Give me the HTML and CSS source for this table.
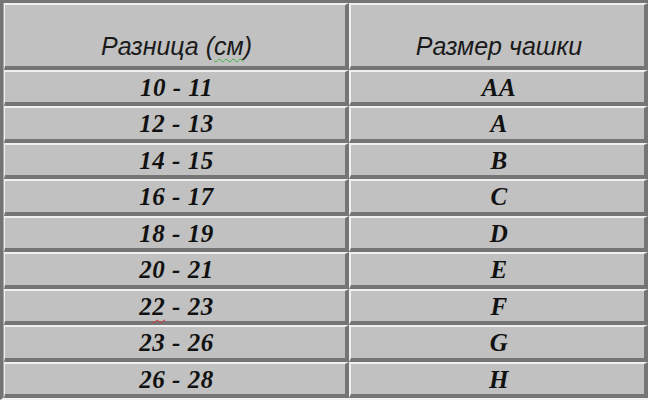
FILE: index.html
```html
<!DOCTYPE html>
<html lang="ru">
<head>
<meta charset="utf-8">
<title>Размер чашки</title>
<link rel="stylesheet" href="styles.css">
</head>
<body>
<div class="sheet">
  <div class="cell head">Разница (<span class="sq-green">см</span>)</div>
  <div class="cell head">Размер чашки</div>
  <div class="cell">10 - 11</div><div class="cell">AA</div>
  <div class="cell">12 - 13</div><div class="cell">A</div>
  <div class="cell">14 - 15</div><div class="cell">B</div>
  <div class="cell">16 - 17</div><div class="cell">C</div>
  <div class="cell">18 - 19</div><div class="cell">D</div>
  <div class="cell">20 - 21</div><div class="cell">E</div>
  <div class="cell">2<span class="sq-red">2</span> - 23</div><div class="cell">F</div>
  <div class="cell">23 - 26</div><div class="cell">G</div>
  <div class="cell">26 - 28</div><div class="cell">H</div>
</div>
</body>
</html>
```
FILE: styles.css
```css
html, body {
  margin: 0;
  height: 100%;
  overflow: hidden;
  background: #c0c0c0;
}

.sheet {
  display: grid;
  grid-template-columns: 345px 299px;
  grid-template-rows: 67px repeat(9, 36.44px);
  width: max-content;
  border-top: 3px solid #747474;
  border-left: 3px solid #747474;
  border-bottom: 2px solid #f2f2f2;
  padding-left: 1px;
  background: #a8a8a8;
}

.cell {
  box-sizing: border-box;
  border-top: 2px solid #f0f0f0;
  border-left: 2px solid #f0f0f0;
  border-right: 4px solid #757575;
  border-bottom: 4px solid #757575;
  background: #c1c1c1;
  text-align: center;
  padding: 2px 0 0 3px;
  font: italic bold 25px/28px "Liberation Serif", "Times New Roman", serif;
  letter-spacing: 0.5px;
  color: #111;
}

.cell:nth-child(odd) {
  border-left-width: 1px;
}

.head {
  padding-top: 28px;
  font: italic 25px/27px "Liberation Sans", Arial, sans-serif;
  letter-spacing: 0;
  color: #1a1a1a;
}

.sq-green {
  text-decoration: underline wavy #3cb043;
  text-decoration-thickness: 1px;
  text-underline-offset: 3px;
}

.sq-red {
  text-decoration: underline wavy #e03030;
  text-decoration-thickness: 1px;
  text-underline-offset: 4px;
}
```
